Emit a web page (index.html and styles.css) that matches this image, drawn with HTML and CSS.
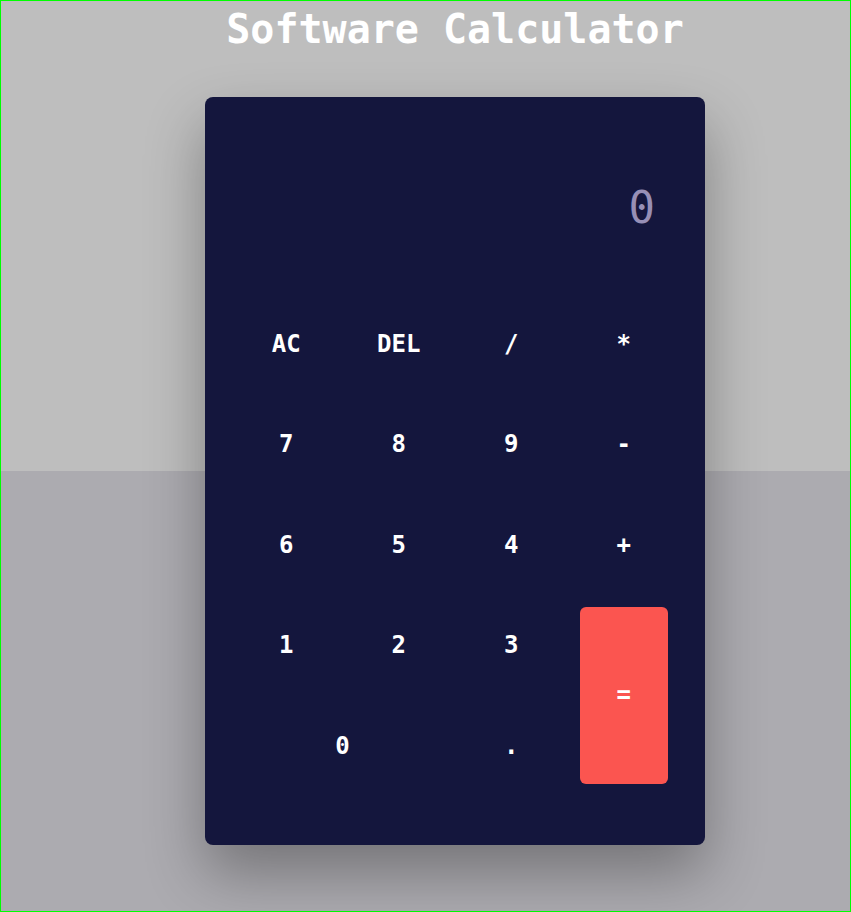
FILE: index.html
```html
<!DOCTYPE html>
<html lang="en">
<head>
<meta charset="utf-8">
<title>Software Calculator</title>
<link rel="stylesheet" href="styles.css">
</head>
<body>
<div class="page">
  <h1 class="title">Software Calculator</h1>
  <div class="calculator">
    <div class="display"><span class="display-value">0</span></div>
    <div class="keys">
      <button class="key">AC</button>
      <button class="key">DEL</button>
      <button class="key">/</button>
      <button class="key">*</button>
      <button class="key">7</button>
      <button class="key">8</button>
      <button class="key">9</button>
      <button class="key">-</button>
      <button class="key">6</button>
      <button class="key">5</button>
      <button class="key">4</button>
      <button class="key">+</button>
      <button class="key">1</button>
      <button class="key">2</button>
      <button class="key">3</button>
      <button class="key key-equals">=</button>
      <button class="key key-zero">0</button>
      <button class="key">.</button>
    </div>
  </div>
</div>
</body>
</html>
```

FILE: styles.css
```css
* { box-sizing: border-box; }
html, body { margin: 0; padding: 0; }
body {
  font-family: "DejaVu Sans Mono", "Liberation Mono", monospace;
  background: linear-gradient(to bottom, #bebebe 0, #bebebe 471px, #acabb0 471px, #acabb0 100%);
  min-height: 912px;
}
.page {
  min-height: 912px;
  border: 1px solid #00ff00;
  display: flex;
  flex-direction: column;
  align-items: center;
  padding-left: 59px;
}
.title {
  margin: 5px 0 0;
  font-size: 40px;
  line-height: 46px;
  font-weight: bold;
  color: #ffffff;
}
.calculator {
  margin-top: 45px;
  width: 500px;
  height: 748px;
  background: #14163d;
  border-radius: 8px;
  box-shadow: 0 28px 60px rgba(0, 0, 0, 0.32);
  padding: 0 25px 50px;
  display: flex;
  flex-direction: column;
}
.display {
  height: 196px;
  display: flex;
  align-items: flex-end;
  justify-content: flex-end;
  padding: 0 25px 58px 0;
}
.display-value {
  font-size: 44px;
  line-height: 52px;
  color: #978fb6;
}
.keys {
  display: grid;
  grid-template-columns: repeat(4, 1fr);
  grid-template-rows: repeat(5, 76px);
  column-gap: 25px;
  row-gap: 24.5px;
  padding: 13.5px 12.5px 11.5px;
}
.key {
  border: none;
  background: transparent;
  color: #ffffff;
  font-family: inherit;
  font-size: 24px;
  font-weight: bold;
  padding: 0;
  border-radius: 6px;
}
.key-equals {
  grid-row: span 2;
  background: #fb5550;
}
.key-zero {
  grid-column: span 2;
}
```
